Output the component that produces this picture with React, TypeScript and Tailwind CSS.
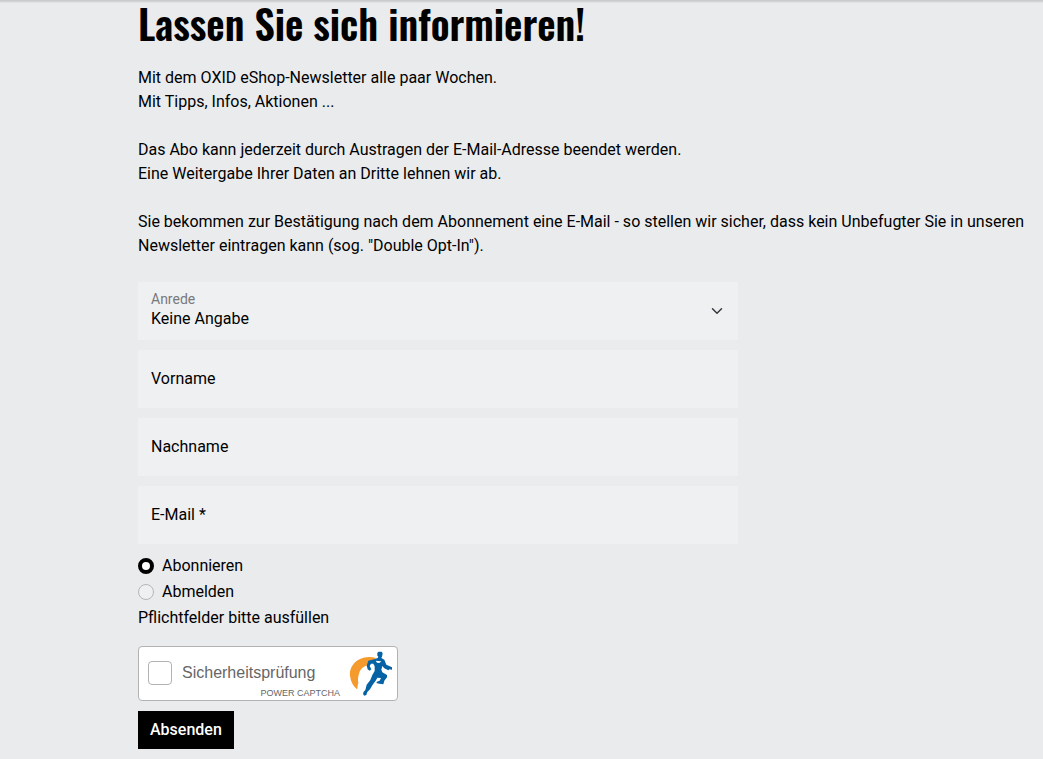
import { useState } from 'react'
import { ChevronDown } from 'lucide-react'

const textFields = [
  { id: 'firstname', label: 'Vorname', type: 'text' },
  { id: 'lastname', label: 'Nachname', type: 'text' },
  { id: 'email', label: 'E-Mail *', type: 'email' },
]

const actions = [
  { value: 'subscribe', label: 'Abonnieren' },
  { value: 'unsubscribe', label: 'Abmelden' },
]

function RunnerLogo() {
  return (
    <svg viewBox="24 30 135 138" className="h-[46px] w-[45px]" aria-hidden="true">
      <path
        fill="#f59b2d"
        d="M108 54C92 48 70 50 54 60C36 72 28 90 30 108C32 125 40 139 51 148C54 142 52 136 55 128C53 119 54 110 57 102C60 88 70 80 82 76C84 70 90 64 102 60Z"
      />
      <path
        fill="#0562a5"
        d="M112 38L116 35H125L128 40L126 50L124 54L133 59L139 74L156 82L156 89L149 88L145 91L133 85L127 78L124 89L127 97L141 105L141 112L133 122L130 133L118 131L109 129L111 125L119 122L123 114L112 113L107 122L98 134L90 148L82 156L79 165L73 167L69 162L71 155L76 150L80 134L91 120L97 105L104 93L104 79L100 71L93 71L89 78L94 88L89 92L83 88L80 77L85 62L102 58L113 54L115 50L112 47Z"
      />
      <path fill="#fff" d="M107 62L124 64L118 69L111 68Z" />
    </svg>
  )
}

export default function App() {
  const [action, setAction] = useState('subscribe')

  return (
    <main className="min-h-screen bg-[#eaebed] pr-3 pl-[138px] pb-2.5 font-[Roboto,sans-serif] text-base text-black shadow-[inset_0_4px_2px_-2px_#c9cacc]">
      <h1 className="pb-5 font-['Oswald','Liberation_Sans_Narrow','Roboto',sans-serif] text-[40px] leading-[46px] font-semibold whitespace-nowrap">
        Lassen Sie sich informieren!
      </h1>

      <div className="space-y-6">
        <p>
          Mit dem OXID eShop-Newsletter alle paar Wochen.
          <br />
          Mit Tipps, Infos, Aktionen ...
        </p>
        <p>
          Das Abo kann jederzeit durch Austragen der E-Mail-Adresse beendet werden.
          <br />
          Eine Weitergabe Ihrer Daten an Dritte lehnen wir ab.
        </p>
        <p>
          Sie bekommen zur Bestätigung nach dem Abonnement eine E-Mail - so stellen wir sicher, dass kein Unbefugter Sie in unseren
          Newsletter eintragen kann (sog. "Double Opt-In").
        </p>
      </div>

      <form className="mt-6 max-w-[600px]" onSubmit={(e) => e.preventDefault()}>
        <div className="space-y-2.5">
          <div className="relative">
            <label htmlFor="salutation" className="absolute top-[7px] left-[13px] text-sm text-[#77797b]">
              Anrede
            </label>
            <select
              id="salutation"
              className="block h-[58px] w-full appearance-none bg-[#eff0f2] px-[13px] pt-4 outline-none"
            >
              <option>Keine Angabe</option>
              <option>Frau</option>
              <option>Herr</option>
            </select>
            <ChevronDown className="pointer-events-none absolute top-5 right-3 size-[18px] text-[#343a40]" />
          </div>

          {textFields.map((field) => (
            <div key={field.id} className="relative">
              <input
                id={field.id}
                type={field.type}
                placeholder=" "
                className="peer block h-[58px] w-full bg-[#eff0f2] px-[13px] pt-4 outline-none"
              />
              <label
                htmlFor={field.id}
                className="pointer-events-none absolute top-[17px] left-[13px] peer-focus:top-[7px] peer-focus:text-sm peer-[:not(:placeholder-shown)]:top-[7px] peer-[:not(:placeholder-shown)]:text-sm"
              >
                {field.label}
              </label>
            </div>
          ))}
        </div>

        <div className="mt-2.5 space-y-0.5">
          {actions.map((item) => (
            <div key={item.value} className="flex items-center gap-2">
              <input
                id={item.value}
                type="radio"
                name="action"
                value={item.value}
                checked={action === item.value}
                onChange={() => setAction(item.value)}
                className="size-4 appearance-none rounded-full border border-[#b5b6b8] bg-[#eff0f2] checked:border-4 checked:border-black checked:bg-white"
              />
              <label htmlFor={item.value}>{item.label}</label>
            </div>
          ))}
          <p>Pflichtfelder bitte ausfüllen</p>
        </div>

        <div className="mt-4 flex h-[55px] w-[260px] items-center justify-between rounded-[4px] border border-[#b2b2b2] bg-white pr-1 pb-px pl-[9px] font-['Liberation_Sans',sans-serif] text-[#666]">
          <div className="relative flex h-full grow items-center gap-2.5">
            <input
              id="captcha"
              type="checkbox"
              className="size-6 appearance-none rounded-[4px] border border-[#b2b2b2] bg-white checked:bg-[#0562a5]"
            />
            <label htmlFor="captcha">Sicherheitsprüfung</label>
            <span className="absolute right-2 bottom-0 text-[9px] leading-3">POWER CAPTCHA</span>
          </div>
          <RunnerLogo />
        </div>

        <button type="submit" className="mt-2.5 block h-[38px] bg-black px-3 font-medium text-white">
          Absenden
        </button>
      </form>
    </main>
  )
}
